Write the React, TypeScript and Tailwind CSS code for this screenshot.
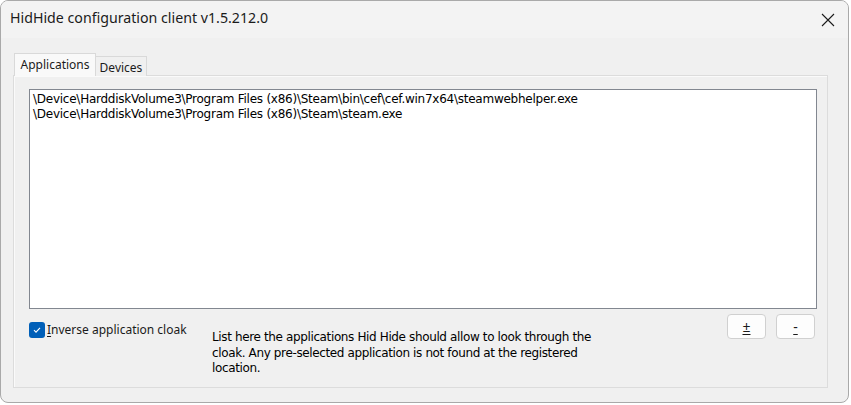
import React from "react";

export default function App() {
  return (
    <div className="w-[851px] h-[405px] bg-white relative overflow-hidden" style={{ fontFamily: '"Noto Sans", "Open Sans", sans-serif' }}>
      <div className="absolute left-0 top-0 w-[849px] h-[403px] rounded-[8px] border border-[#a9a9a9] bg-[#f0f0f0] overflow-hidden flex flex-col">
        {/* title bar */}
        <div className="h-[37px] bg-[#f3f3f3] flex items-center justify-between pl-[9px] pr-[12px] shrink-0">
          <span className="text-[14.2px] text-[#1b1b1b] leading-none pb-[2px]">HidHide configuration client v1.5.212.0</span>
          <svg width="14" height="14" viewBox="0 0 14 14" className="mr-[1px]">
            <path d="M1 1 L13 13 M13 1 L1 13" stroke="#1b1b1b" strokeWidth="1.1" fill="none" />
          </svg>
        </div>
        {/* body */}
        <div className="flex-1 pl-[12px] pr-[20px] pt-[15px] pb-[14px] flex flex-col">
          {/* tabs */}
          <div className="flex items-end h-[23px] relative z-10">
            <div className="h-[23px] w-[82px] border border-b-0 border-[#d9d9d9] bg-[#f9f9f9] text-[12px] text-[#1b1b1b] flex items-center justify-center leading-none -mr-[1px] ml-[1px]">Applications</div>
            <div className="h-[20px] w-[52px] border border-b-0 border-[#d9d9d9] bg-[#f0f0f0] text-[12px] text-[#1b1b1b] flex items-center justify-center leading-none pt-[2px]">Devices</div>
          </div>
          <div className="flex-1 border border-[#dcdcdc] bg-[#f0f0f0] -mt-[1px] shadow-[inset_1px_1px_0_#fafafa] pl-[15px] pr-[10px] pt-[13px] flex flex-col">
            <div className="h-[220px] border border-[#828790] bg-white pl-[3px] pt-[2px] text-[12px] leading-[15px] text-black" style={{ fontFamily: '"DejaVu Sans", sans-serif', letterSpacing: "-0.25px" }}>
              <div>\Device\HarddiskVolume3\Program Files (x86)\Steam\bin\cef\cef.win7x64\steamwebhelper.exe</div>
              <div>\Device\HarddiskVolume3\Program Files (x86)\Steam\steam.exe</div>
            </div>
            <div className="flex mt-[12px]">
              <div className="flex items-start w-[183px] shrink-0 pt-[1px]">
                <div className="w-[16px] h-[16px] rounded-[3px] bg-[#005fb8] flex items-center justify-center shrink-0">
                  <svg width="10" height="10" viewBox="0 0 10 10">
                    <path d="M2 5.2 L4 7.2 L8 2.8" stroke="white" strokeWidth="1.1" fill="none" />
                  </svg>
                </div>
                <span className="ml-[2px] text-[12px] leading-[16px] text-[#1b1b1b]"><span className="underline underline-offset-2">I</span>nverse application cloak</span>
              </div>
              <div className="w-[400px] pt-[9px] text-[12px] leading-[15.5px] text-black" style={{ fontFamily: '"DejaVu Sans", sans-serif', letterSpacing: "-0.37px" }}>
                List here the applications Hid Hide should allow to look through the cloak. Any pre-selected application is not found at the registered location.
              </div>
              <div className="flex-1 flex justify-end gap-[10px] pr-[2px] -mt-[7px]">
                <button className="w-[39px] h-[25px] rounded-[4px] border border-[#d0d0d0] bg-[#fdfdfd] text-[14px] text-[#1b1b1b] leading-none flex items-center justify-center"><span className="underline underline-offset-2">±</span></button>
                <button className="w-[39px] h-[25px] rounded-[4px] border border-[#d0d0d0] bg-[#fdfdfd] text-[14px] text-[#1b1b1b] leading-none flex items-center justify-center"><span className="underline underline-offset-2">-</span></button>
              </div>
            </div>
          </div>
        </div>
      </div>
    </div>
  );
}
